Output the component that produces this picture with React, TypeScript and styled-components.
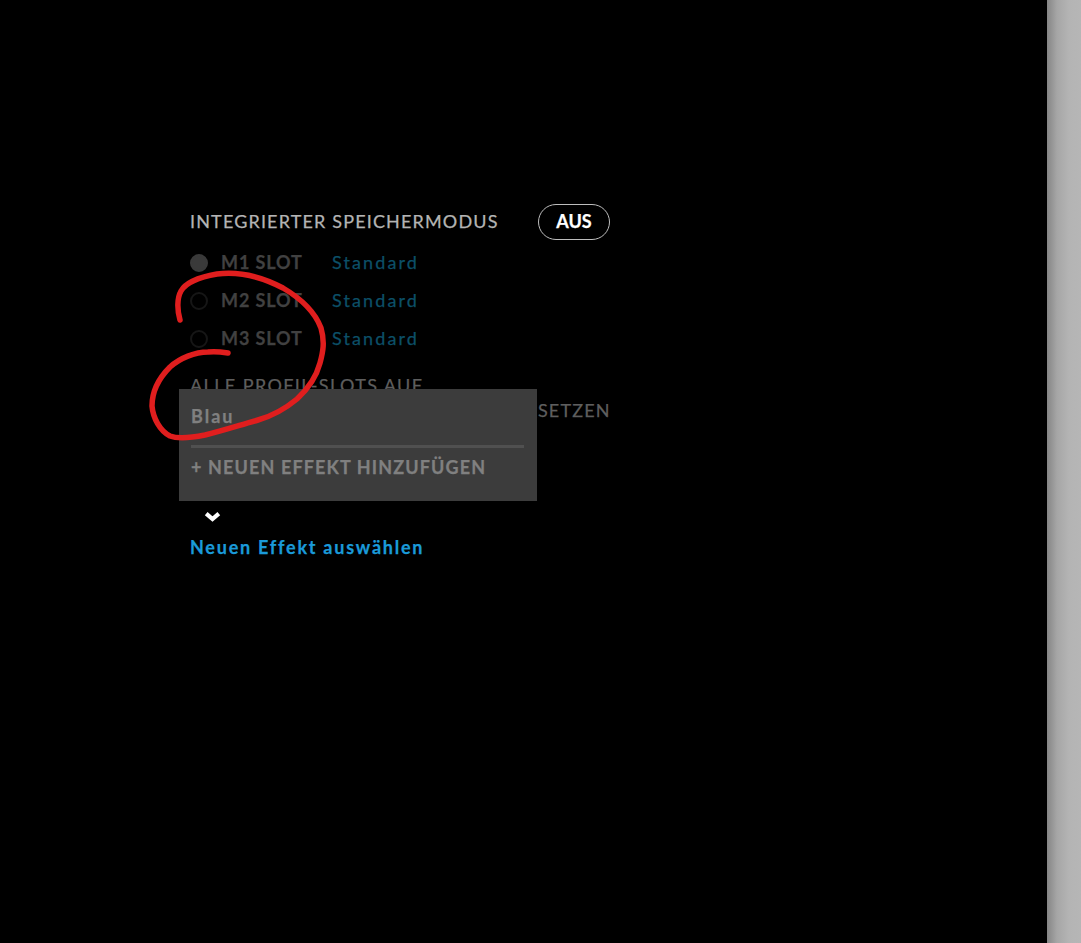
import * as React from 'react';
import styled, { createGlobalStyle } from 'styled-components';

const GlobalStyle = createGlobalStyle`
    html, body {
        margin: 0;
        padding: 0;
        height: 100%;
        background: #000;
    }
    #root {
        height: 100%;
    }
`;

const Page = styled.div`
    position: relative;
    display: flex;
    width: 100%;
    height: 943px;
    overflow: hidden;
    font-family: Lato, "Open Sans", sans-serif;
    -webkit-text-stroke: 0.25px currentColor;
`;

const Main = styled.main`
    position: relative;
    flex: 1;
    background: #000;
    padding: 205px 0 0 190px;
    box-sizing: border-box;
`;

const SideStrip = styled.div`
    width: 34px;
    background: linear-gradient(to right, #858585 0, #a6a6a6 10px, #b4b4b4 22px, #b6b6b6 100%);
`;

const Content = styled.div`
    position: relative;
    width: 420px;
`;

const HeaderRow = styled.div`
    display: flex;
    align-items: center;
    justify-content: space-between;
    height: 33px;
    margin-bottom: 6px;
`;

const Heading = styled.span`
    padding-bottom: 2px;
    font-size: 18px;
    letter-spacing: 1.16px;
    color: #b4b4b4;
    white-space: nowrap;
`;

const ToggleButton = styled.button`
    width: 72px;
    height: 36px;
    margin-top: 1px;
    padding: 0 0 3px;
    border: 1px solid #bdbdbd;
    border-radius: 18px;
    background: transparent;
    color: #fff;
    font-family: inherit;
    font-size: 18px;
    font-weight: 700;
`;

const SlotRow = styled.div`
    display: flex;
    align-items: center;
    height: 38px;
`;

const Radio = styled.span<{ $active?: boolean }>`
    width: 18px;
    height: 18px;
    box-sizing: border-box;
    border-radius: 50%;
    border: 2px solid ${p => (p.$active ? '#3a3a3a' : '#161616')};
    background: ${p => (p.$active ? '#3a3a3a' : 'transparent')};
`;

const SlotLabel = styled.span`
    width: 111px;
    margin-left: 13px;
    padding-bottom: 2px;
    font-size: 18px;
    font-weight: 700;
    letter-spacing: 0.9px;
    color: #414141;
    white-space: nowrap;
`;

const ProfileName = styled.span`
    padding-bottom: 2px;
    font-size: 18px;
    letter-spacing: 2.1px;
    color: #0c5068;
`;

const ResetText = styled.div`
    margin-top: 15px;
    font-size: 18px;
    line-height: 25px;
    color: #5e5e5e;
    white-space: nowrap;
`;

const ResetLine = styled.div<{ $spacing: number }>`
    letter-spacing: ${p => p.$spacing}px;
`;

const EffectMenu = styled.div`
    position: absolute;
    left: -11px;
    top: 184px;
    width: 358px;
    height: 112px;
    box-sizing: border-box;
    padding: 15px 13px 0 12px;
    background: #3c3c3c;
`;

const MenuItem = styled.div<{ $spacing: number }>`
    font-size: 18px;
    font-weight: 700;
    letter-spacing: ${p => p.$spacing}px;
    line-height: 24px;
    color: #808080;
`;

const MenuDivider = styled.div`
    height: 3px;
    margin: 17px 0 7px;
    background: #505050;
`;

const ChevronWrap = styled.div`
    display: flex;
    margin: 86px 0 0 14px;
    height: 14px;
    align-items: center;
`;

const SelectLink = styled.a`
    display: block;
    margin-top: 13px;
    font-size: 18px;
    font-weight: 700;
    letter-spacing: 1.76px;
    color: #1a9ad9;
    white-space: nowrap;
`;

const Scribble = styled.svg`
    position: absolute;
    left: 0;
    top: 0;
    pointer-events: none;
`;

const slots = ['M1 SLOT', 'M2 SLOT', 'M3 SLOT'];

export default function App() {
    return (
        <Page>
            <GlobalStyle />
            <Main>
                <Content>
                    <HeaderRow>
                        <Heading>INTEGRIERTER SPEICHERMODUS</Heading>
                        <ToggleButton>AUS</ToggleButton>
                    </HeaderRow>
                    {slots.map((slot, index) => (
                        <SlotRow key={slot}>
                            <Radio $active={index === 0} />
                            <SlotLabel>{slot}</SlotLabel>
                            <ProfileName>Standard</ProfileName>
                        </SlotRow>
                    ))}
                    <ResetText>
                        <ResetLine $spacing={1.4}>ALLE PROFIL-SLOTS AUF</ResetLine>
                        <ResetLine $spacing={1.18}>STANDARDEINSTELLUNGEN ZURÜCKSETZEN</ResetLine>
                    </ResetText>
                    <EffectMenu>
                        <MenuItem $spacing={2}>Blau</MenuItem>
                        <MenuDivider />
                        <MenuItem $spacing={1.12}>+ NEUEN EFFEKT HINZUFÜGEN</MenuItem>
                    </EffectMenu>
                    <ChevronWrap>
                        <svg width="17" height="11" viewBox="0 0 17 11">
                            <path d="M2.2 2.6 L8.5 8 L14.8 2.6" fill="none" stroke="#fff" strokeWidth="4.2" />
                        </svg>
                    </ChevronWrap>
                    <SelectLink>Neuen Effekt auswählen</SelectLink>
                </Content>
            </Main>
            <SideStrip />
            <Scribble width="1081" height="943" viewBox="0 0 1081 943">
                <path
                    d="M180 320 C177 310 177 298 181 291 C186 282 200 277 217 274 C240 271 262 277 283 288 C300 298 315 312 321 328 C325 342 323 352 320 363 C316 378 309 388 297 399 C285 409 272 416 258 420 C240 425 225 430 205 435 C190 438 178 439 170 436 C160 431 153 418 152 406 C152 392 158 379 170 367 C180 358 195 352 208 352 C215 351 222 352 228 353"
                    fill="none"
                    stroke="#e01e1e"
                    strokeWidth="5.5"
                    strokeLinecap="round"
                    strokeLinejoin="round"
                />
            </Scribble>
        </Page>
    );
}
